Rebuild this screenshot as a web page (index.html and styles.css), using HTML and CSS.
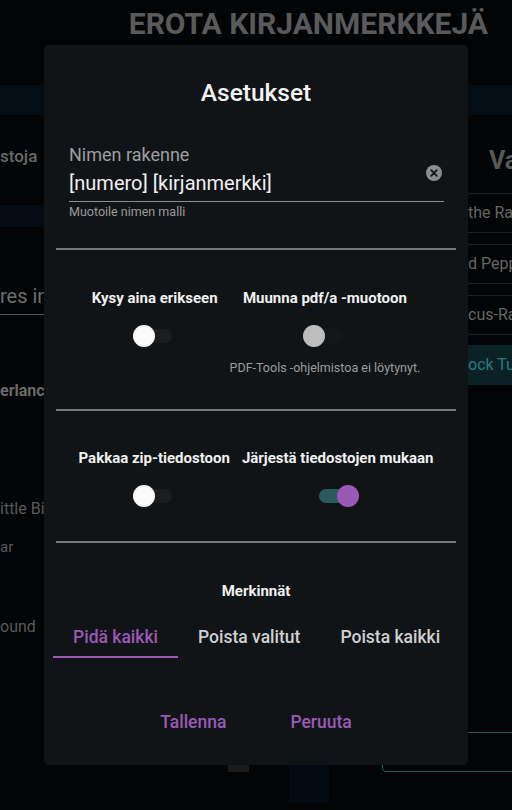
FILE: index.html
```html
<!DOCTYPE html>
<html lang="fi">
<head>
<meta charset="utf-8">
<title>Asetukset</title>
<link rel="stylesheet" href="styles.css">
</head>
<body>
<div class="bg">
  <h1 class="bg-title">EROTA KIRJANMERKKEJÄ</h1>
  <div class="bg-band"></div>
  <div class="bg-cols">
    <div class="bg-left">
      <div class="l-stoja">stoja</div>
      <div class="l-band"></div>
      <div class="l-input">res in</div>
      <div class="l-bold">erlanc</div>
      <div class="l-text l-little">ittle Bi</div>
      <div class="l-text l-ar">ar</div>
      <div class="l-text l-ound">ound</div>
    </div>
    <div class="bg-right">
      <div class="r-head">Va</div>
      <div class="r-item r-first">the Ra</div>
      <div class="r-item">d Pepp</div>
      <div class="r-item">cus-Ra</div>
      <div class="r-item r-active">ock Tu</div>
    </div>
  </div>
  <div class="bg-foot">
    <div class="foot-btn"></div>
    <div class="foot-col"></div>
    <div class="foot-box"></div>
  </div>
</div>

<div class="dialog">
  <h2 class="dialog-title">Asetukset</h2>

  <div class="field">
    <div class="field-row">
      <div class="field-main">
        <div class="field-label">Nimen rakenne</div>
        <div class="field-value">[numero] [kirjanmerkki]</div>
      </div>
      <svg class="clear" width="16" height="16" viewBox="0 0 16 16">
        <circle cx="8" cy="8" r="8" fill="#8b8c8d"/>
        <path d="M5.2 5.2 L10.8 10.8 M10.8 5.2 L5.2 10.8" stroke="#15181b" stroke-width="1.8" stroke-linecap="round"/>
      </svg>
    </div>
    <div class="field-hint">Muotoile nimen malli</div>
  </div>

  <div class="divider first"></div>

  <div class="opts">
    <div class="opt">
      <div class="opt-label">Kysy aina erikseen</div>
      <div class="switch"><span class="track"></span><span class="knob"></span></div>
    </div>
    <div class="opt">
      <div class="opt-label">Muunna pdf/a -muotoon</div>
      <div class="switch disabled"><span class="track"></span><span class="knob"></span></div>
      <div class="opt-hint">PDF-Tools -ohjelmistoa ei löytynyt.</div>
    </div>
  </div>

  <div class="divider"></div>

  <div class="opts second">
    <div class="opt">
      <div class="opt-label">Pakkaa zip-tiedostoon</div>
      <div class="switch"><span class="track"></span><span class="knob"></span></div>
    </div>
    <div class="opt">
      <div class="opt-label">Järjestä tiedostojen mukaan</div>
      <div class="switch on"><span class="track"></span><span class="knob"></span></div>
    </div>
  </div>

  <div class="divider"></div>

  <div class="marks">
    <div class="marks-title">Merkinnät</div>
    <div class="tabs">
      <div class="tab active">Pidä kaikki</div>
      <div class="tab">Poista valitut</div>
      <div class="tab">Poista kaikki</div>
    </div>
  </div>

  <div class="actions">
    <button class="btn">Tallenna</button>
    <button class="btn">Peruuta</button>
  </div>
</div>
</body>
</html>
```
FILE: styles.css
```css
* {
  box-sizing: border-box;
  margin: 0;
  padding: 0;
}

body {
  width: 512px;
  height: 810px;
  overflow: hidden;
  position: relative;
  background: #030405;
  font-family: Roboto, "Liberation Sans", sans-serif;
}

/* ---------- background page ---------- */
.bg {
  display: flex;
  flex-direction: column;
  height: 810px;
}

.bg-title {
  margin-top: 8px;
  padding-right: 24px;
  text-align: right;
  font-size: 30px;
  line-height: 32px;
  font-weight: 700;
  color: #5a5a5a;
  white-space: nowrap;
}

.bg-band {
  margin-top: 45px;
  height: 30px;
  background: #050d15;
}

.bg-cols {
  display: flex;
  justify-content: space-between;
  height: 617px;
}

.bg-left,
.bg-right {
  width: 44px;
  overflow: hidden;
  white-space: nowrap;
}

.l-stoja {
  margin-top: 30px;
  font-size: 17px;
  line-height: 22px;
  font-weight: 500;
  color: #686868;
}

.l-band {
  margin-top: 38px;
  height: 22px;
  background: #050c14;
}

.l-input {
  margin-top: 56px;
  padding-bottom: 5px;
  border-bottom: 1px solid #555;
  font-size: 20px;
  line-height: 26px;
  color: #6e6e6e;
}

.l-bold {
  margin-top: 66px;
  font-size: 16px;
  line-height: 20px;
  font-weight: 700;
  color: #6a6a6a;
}

.l-text {
  font-size: 16px;
  line-height: 20px;
  color: #5a5a5a;
}

.l-little { margin-top: 98px; }
.l-ar { margin-top: 18px; font-size: 15px; }
.l-ound { margin-top: 60px; }

.r-head {
  margin-top: 31px;
  padding-left: 21px;
  font-size: 25px;
  line-height: 30px;
  font-weight: 700;
  color: #585858;
}

.r-item {
  height: 40px;
  margin-top: 11px;
  border-top: 1px solid #1c2024;
  border-bottom: 1px solid #1c2024;
  font-size: 16px;
  line-height: 38px;
  color: #666;
}

.r-first { margin-top: 17px; }

.r-active {
  margin-top: 10px;
  border-color: transparent;
  background: #0a2226;
  color: #2b7b7c;
}

.bg-foot {
  display: flex;
  align-items: flex-start;
  height: 78px;
}

.foot-btn {
  flex-shrink: 0;
  margin-left: 228px;
  margin-top: 33px;
  width: 21px;
  height: 7px;
  background: #1b1b1b;
}

.foot-col {
  flex-shrink: 0;
  margin-left: 40px;
  margin-top: 33px;
  width: 40px;
  height: 38px;
  background: #040a11;
}

.foot-box {
  flex-shrink: 0;
  margin-left: 53px;
  width: 140px;
  height: 40px;
  border: 1px solid #235f5f;
  border-radius: 4px;
}

/* ---------- dialog ---------- */
.dialog {
  position: absolute;
  left: 44px;
  top: 45px;
  width: 424px;
  height: 720px;
  padding: 32px 8px 0;
  background: #111417;
  border-radius: 5px;
  display: flex;
  flex-direction: column;
}

.dialog-title {
  text-align: center;
  font-size: 24.5px;
  line-height: 32px;
  font-weight: 500;
  color: #f2f2f2;
}

.field {
  margin: 34px 16px 0 17px;
}

.field-row {
  display: flex;
  align-items: center;
  padding-bottom: 4px;
  border-bottom: 1px solid #8d8e8f;
}

.field-main {
  flex: 1;
}

.field-label {
  font-size: 18px;
  line-height: 24px;
  color: #9d9e9f;
}

.field-value {
  margin-top: 2px;
  font-size: 20px;
  line-height: 28px;
  color: #f0f0f0;
}

.clear {
  flex-shrink: 0;
  margin-top: 6px;
  margin-right: 2px;
}

.field-hint {
  margin-top: 2px;
  font-size: 12.5px;
  line-height: 16px;
  color: #9a9b9c;
}

.divider {
  height: 2px;
  margin: 0 4px;
  background: #77797b;
}

.divider.first {
  margin-top: 28px;
}

.opts {
  display: flex;
  justify-content: center;
  align-items: flex-start;
  gap: 12px;
  padding: 38px 0 33px;
}

.opts.second {
  padding: 37px 0 34px;
}

.opt {
  display: flex;
  flex-direction: column;
  align-items: center;
}

.opt-label {
  font-size: 15px;
  line-height: 20px;
  font-weight: 700;
  color: #f0f0f0;
  white-space: nowrap;
}

.switch {
  position: relative;
  margin-top: 17px;
  width: 43px;
  height: 22px;
}

.track {
  position: absolute;
  left: 3px;
  top: 4px;
  width: 36px;
  height: 14px;
  border-radius: 7px;
  background: #1a1e21;
}

.knob {
  position: absolute;
  left: 0;
  top: 0;
  width: 22px;
  height: 22px;
  border-radius: 50%;
  background: #fafafa;
}

.switch.disabled .track {
  background: #14171a;
}

.switch.disabled .knob {
  background: #bdbdbd;
}

.switch.on .track {
  background: #2d5a5c;
}

.switch.on .knob {
  left: 21px;
  background: #9b59b6;
}

.opt-hint {
  margin-top: 13px;
  font-size: 12.5px;
  line-height: 16px;
  color: #9a9b9c;
  white-space: nowrap;
}

.marks {
  padding-top: 38px;
}

.marks-title {
  text-align: center;
  font-size: 15px;
  line-height: 20px;
  font-weight: 700;
  color: #f0f0f0;
}

.tabs {
  display: flex;
  margin: 24px 0 0 1px;
}

.tab {
  padding: 0 20px 7px;
  border-bottom: 2px solid transparent;
  font-size: 17.5px;
  line-height: 24px;
  font-weight: 500;
  color: #cfd0d1;
  white-space: nowrap;
}

.tab.active {
  color: #9b59b6;
  border-bottom-color: #9b59b6;
}

.actions {
  display: flex;
  justify-content: center;
  gap: 32px;
  margin-top: 52px;
}

.btn {
  padding: 0 16px;
  border: none;
  background: none;
  font-family: inherit;
  font-size: 17.5px;
  line-height: 24px;
  font-weight: 500;
  color: #9b59b6;
}
```
